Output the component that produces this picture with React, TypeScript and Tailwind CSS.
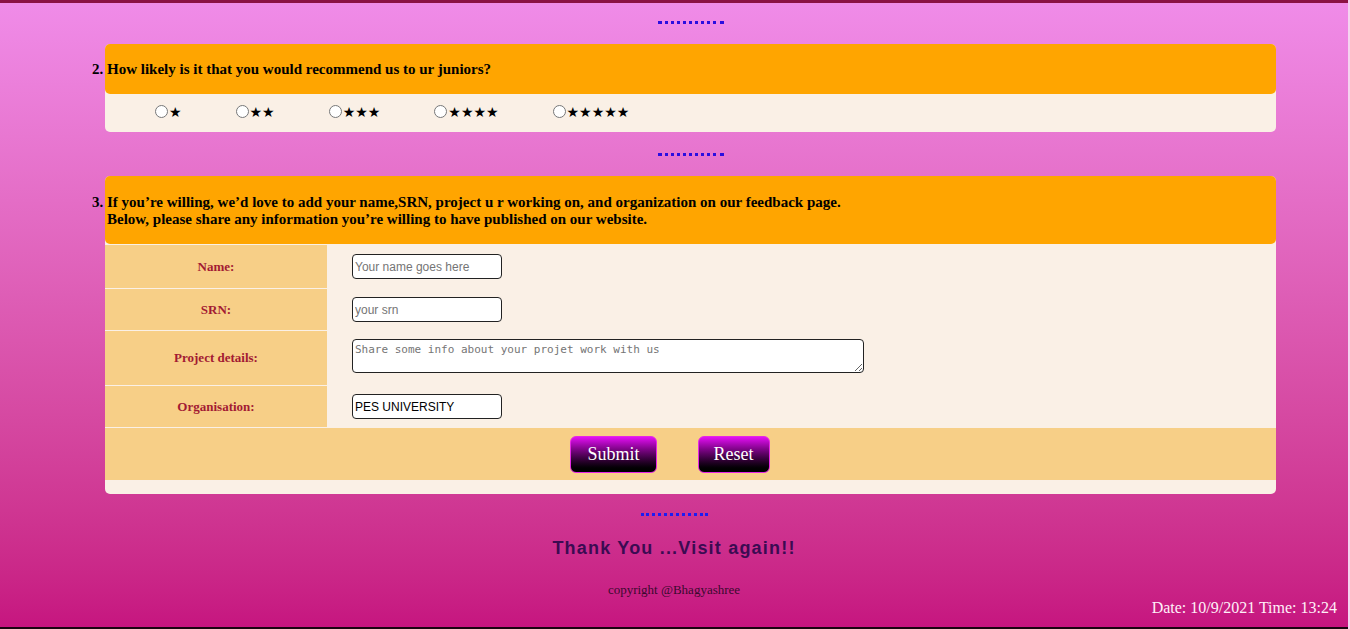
import React from 'react'

const serif = "font-['Liberation_Serif',serif]"

function Dots({ color, width }: { color: string; width: string }) {
  return <div className={`mx-auto border-t-[3px] border-dotted ${color} ${width}`} />
}

const ratings = [1, 2, 3, 4, 5]

export default function App() {
  return (
    <div className="flex h-[629px] w-full overflow-hidden bg-[#f6d3f0]">
      <div className="flex flex-1 flex-col bg-gradient-to-b from-[#f08ce9] to-[#c6147f]">
        <div className="h-[3px] bg-[#8b1244]" />

        <main className="pl-[105px] pr-[72px]">
          <div className="pt-[18px] pb-[20px]">
            <Dots color="border-[#2a0ee0]" width="w-[66px]" />
          </div>

          {/* question 2 */}
          <section className={`rounded-[5px] bg-[#faf0e6] ${serif}`}>
            <div className="h-[50px] rounded-[5px] bg-[#ffa500] py-4 pl-[2px] text-[15px] font-bold leading-[18px] text-black">
              <ol start={2} className="list-outside list-decimal">
                <li>How likely is it that you would recommend us to ur juniors?</li>
              </ol>
            </div>
            <div className="flex h-[38px] items-center gap-[54px] pb-[3px] pl-[50px]">
              {ratings.map((n) => (
                <label key={n} className="flex items-center">
                  <input type="radio" name="rate" className="m-0 h-[13px] w-[13px]" />
                  <span className="ml-[1px] font-['DejaVu_Sans',sans-serif] text-[14px] font-bold leading-none text-black">
                    {'★'.repeat(n)}
                  </span>
                </label>
              ))}
            </div>
          </section>

          <div className="pt-[21px] pb-[20px]">
            <Dots color="border-[#2a0ee0]" width="w-[66px]" />
          </div>

          {/* question 3 */}
          <section className={`rounded-[5px] bg-[#faf0e6] pb-[14px] ${serif}`}>
            <div className="h-[68px] rounded-[5px] bg-[#ffa500] pt-[18px] pl-[2px] text-[15px] font-bold leading-[17px] text-black">
              <ol start={3} className="list-outside list-decimal">
                <li>
                  If you’re willing, we’d love to add your name,SRN, project u r working on, and organization on our feedback page.
                  <br />
                  Below, please share any information you’re willing to have published on our website.
                </li>
              </ol>
            </div>

            <div className="flex flex-col gap-[1px] pt-[1px]">
              <div className="flex h-[43px]">
                <div className="flex w-[222px] items-center justify-center bg-[#f7cf87] text-[13px] font-bold text-[#a31b33]">Name:</div>
                <div className="flex flex-1 items-center pl-[25px]">
                  <input
                    type="text"
                    placeholder="Your name goes here"
                    className="h-[25px] w-[150px] rounded-[4px] border border-[#222] bg-white px-[2px] font-['Liberation_Sans',sans-serif] text-[12px] text-black placeholder:text-[#757575]"
                  />
                </div>
              </div>
              <div className="flex h-[41px]">
                <div className="flex w-[222px] items-center justify-center bg-[#f7cf87] text-[13px] font-bold text-[#a31b33]">SRN:</div>
                <div className="flex flex-1 items-center pl-[25px]">
                  <input
                    type="text"
                    placeholder="your srn"
                    className="h-[25px] w-[150px] rounded-[4px] border border-[#222] bg-white px-[2px] font-['Liberation_Sans',sans-serif] text-[12px] text-black placeholder:text-[#757575]"
                  />
                </div>
              </div>
              <div className="flex h-[54px]">
                <div className="flex w-[222px] items-center justify-center bg-[#f7cf87] text-[13px] font-bold text-[#a31b33]">Project details:</div>
                <div className="flex flex-1 items-start pt-[8px] pl-[25px]">
                  <textarea
                    placeholder="Share some info about your projet work with us"
                    className="h-[34px] w-[512px] rounded-[4px] border border-[#222] bg-white px-[2px] py-[3px] font-['DejaVu_Sans_Mono',monospace] text-[11px] leading-[13px] text-black placeholder:text-[#757575]"
                  />
                </div>
              </div>
              <div className="flex h-[41px]">
                <div className="flex w-[222px] items-center justify-center bg-[#f7cf87] text-[13px] font-bold text-[#a31b33]">Organisation:</div>
                <div className="flex flex-1 items-center pl-[25px]">
                  <input
                    type="text"
                    defaultValue="PES UNIVERSITY"
                    className="h-[25px] w-[150px] rounded-[4px] border border-[#222] bg-white px-[2px] font-['Liberation_Sans',sans-serif] text-[12px] text-black"
                  />
                </div>
              </div>
              <div className="flex h-[52px] items-center justify-center gap-[41px] bg-[#f7cf87] pr-[41px]">
                <button className="h-[37px] rounded-[6px] border border-[#e626e6] bg-gradient-to-b from-[#e40ff4] to-black px-[16px] text-[18px] text-white">
                  Submit
                </button>
                <button className="h-[37px] rounded-[6px] border border-[#e626e6] bg-gradient-to-b from-[#e40ff4] to-black px-[15px] text-[18px] text-white">
                  Reset
                </button>
              </div>
            </div>
          </section>
        </main>

        <footer className="flex flex-1 flex-col">
          <div className="pt-[19px]">
            <Dots color="border-[#1c1cf2]" width="w-[67px]" />
          </div>
          <h2 className="mt-[21px] text-center font-['Liberation_Sans',sans-serif] text-[18px] font-bold leading-[22px] tracking-[1.2px] text-[#3b0b52]">
            Thank You ...Visit again!!
          </h2>
          <p className={`mt-[23px] text-center text-[13px] leading-[15px] text-[#3a0a2e] ${serif}`}>copyright @Bhagyashree</p>
          <p className={`mt-[2px] pr-[11px] text-right text-[16px] leading-[18px] text-[#fff0f8] ${serif}`}>
            Date: 10/9/2021 Time: 13:24
          </p>
          <div className="mt-auto h-[2px] bg-[#1a0410]" />
        </footer>
      </div>
      <div className="w-[2px]" />
    </div>
  )
}
